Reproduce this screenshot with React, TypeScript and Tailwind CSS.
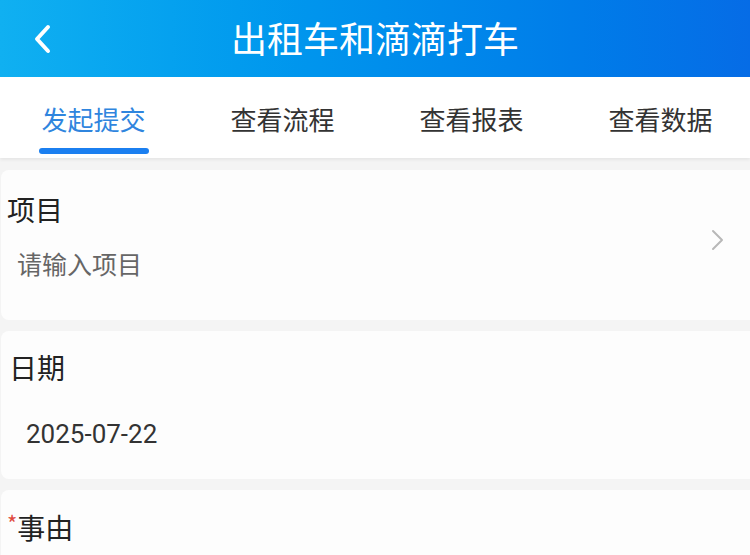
import React from "react";

const font = { fontFamily: '"Noto Sans CJK SC", "Noto Sans", sans-serif' };

export default function App() {
  const tabs = ["发起提交", "查看流程", "查看报表", "查看数据"];
  return (
    <div className="w-[750px] h-[555px] overflow-hidden bg-[#f4f4f4] flex flex-col" style={font}>
      {/* Header */}
      <div className="h-[77px] shrink-0 bg-gradient-to-r from-[#10b0f1] to-[#066ce6] flex items-center relative">
        <svg className="absolute left-[32px] top-[24px]" width="22" height="30" viewBox="0 0 22 30" fill="none">
          <path d="M16 3 L5 15 L16 27" stroke="white" strokeWidth="4" strokeLinecap="round" strokeLinejoin="round" />
        </svg>
        <div className="flex-1 text-center text-white text-[36px] leading-none pb-[4px]">出租车和滴滴打车</div>
      </div>
      {/* Tabs */}
      <div className="h-[81px] shrink-0 bg-white flex shadow-[0_2px_3px_rgba(0,0,0,0.06)] relative z-10">
        <div className="flex -ml-[1px]">
          {tabs.map((t, i) => (
            <div key={t} className="w-[189px] h-full flex flex-col items-center relative">
              <div
                className={
                  "mt-[23px] text-[26px] leading-[38px] " +
                  (i === 0 ? "text-[#2f85de]" : "text-[#333333]")
                }
              >
                {t}
              </div>
              {i === 0 && <div className="mt-[10px] w-[110px] h-[6px] rounded-full bg-[#1b7ff0]" />}
            </div>
          ))}
        </div>
      </div>
      {/* Cards */}
      <div className="flex flex-col gap-[11px] pt-[12px] pl-[1px]">
        <div className="h-[150px] bg-[#fdfdfd] rounded-l-lg flex">
          <div className="flex-1 flex flex-col pt-[19px] pl-[6px]">
            <div className="text-[28px] leading-[40px] text-[#222222]">项目</div>
            <div className="mt-[16px] pl-[10px] text-[25px] leading-[36px] text-[#666666]">请输入项目</div>
          </div>
          <div className="flex items-center mr-[25px] mb-[10px]">
            <svg width="14" height="22" viewBox="0 0 14 22" fill="none">
              <path d="M2 2 L11 11 L2 20" stroke="#b8b8b8" strokeWidth="2" strokeLinecap="round" strokeLinejoin="round" />
            </svg>
          </div>
        </div>
        <div className="h-[148px] bg-[#fdfdfd] rounded-l-lg flex flex-col pt-[16px] pl-[8px]">
          <div className="text-[28px] leading-[40px] text-[#222222]">日期</div>
          <div
            className="mt-[29px] pl-[17px] text-[26px] leading-[36px] text-[#333333]"
            style={{ fontFamily: 'Roboto, "Noto Sans", sans-serif' }}
          >
            2025-07-22
          </div>
        </div>
        <div className="h-[100px] bg-[#fdfdfd] rounded-l-lg flex flex-col pt-[17px] pl-[6px]">
          <div className="text-[28px] leading-[40px] text-[#222222] flex items-start">
            <span className="text-[#e04a3f] text-[22px] leading-[30px]">*</span>
            <span>事由</span>
          </div>
        </div>
      </div>
    </div>
  );
}
